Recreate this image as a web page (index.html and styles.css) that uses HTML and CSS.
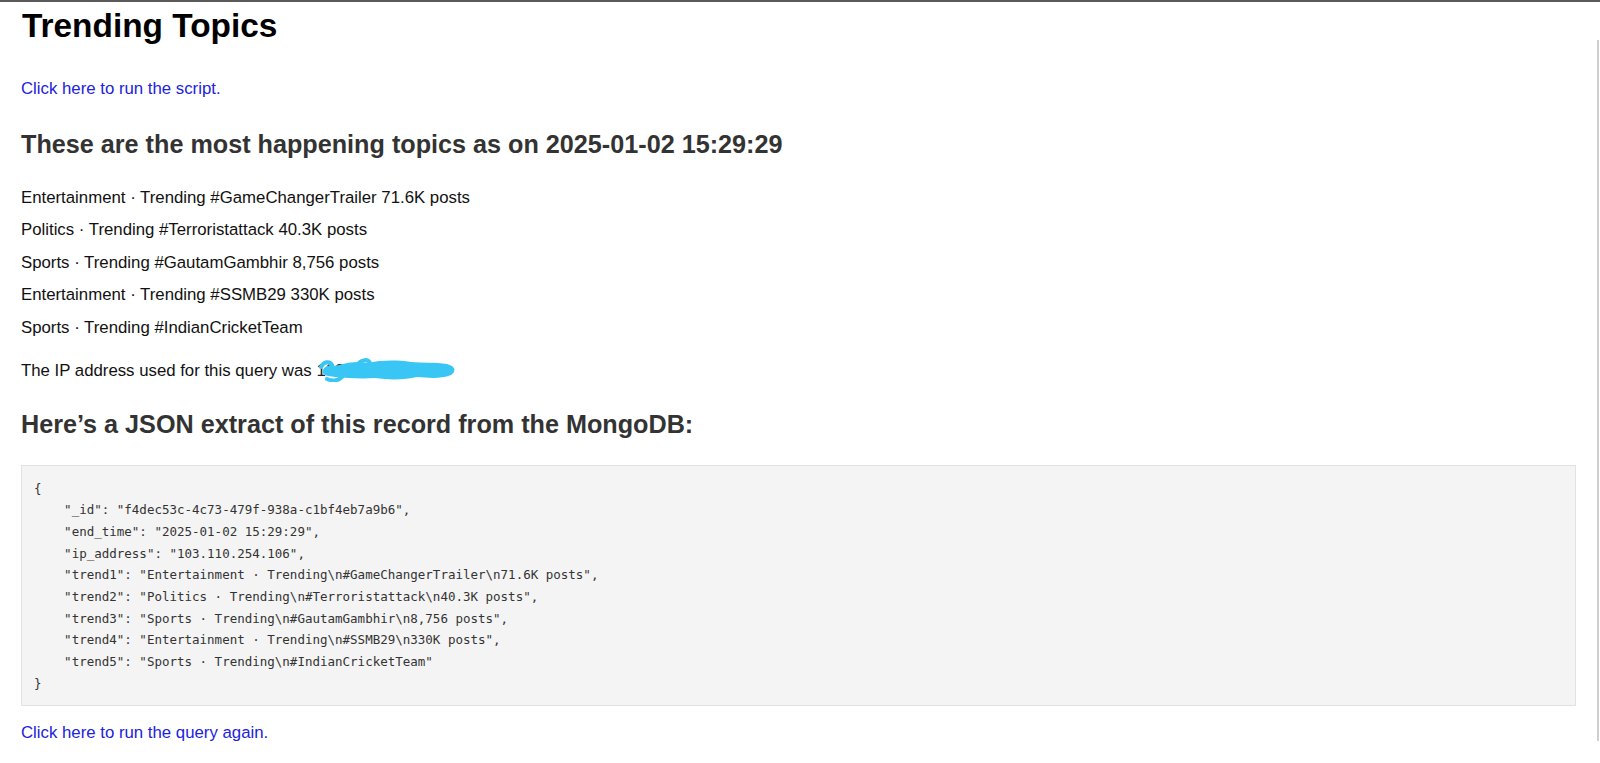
FILE: index.html
```html
<!DOCTYPE html>
<html lang="en">
<head>
<meta charset="utf-8">
<title>Trending Topics</title>
<link rel="stylesheet" href="styles.css">
</head>
<body>
<div class="frame-top"></div>
<div class="scroll-thumb"></div>
<main class="page">
  <h1 class="title">Trending Topics</h1>
  <p class="link-row"><a class="link" href="#">Click here to run the script.</a></p>
  <h2 class="subtitle">These are the most happening topics as on 2025-01-02 15:29:29</h2>
  <ul class="trends">
    <li class="trend">Entertainment · Trending #GameChangerTrailer 71.6K posts</li>
    <li class="trend">Politics · Trending #Terroristattack 40.3K posts</li>
    <li class="trend">Sports · Trending #GautamGambhir 8,756 posts</li>
    <li class="trend">Entertainment · Trending #SSMB29 330K posts</li>
    <li class="trend">Sports · Trending #IndianCricketTeam</li>
  </ul>
  <p class="ip">The IP address used for this query was <span class="ip-value">103.110.254.106<svg class="scribble" viewBox="0 0 140 24" width="142" height="24" aria-hidden="true"><path d="M5 12 C9 5 15 9 21 7 C31 4 41 3 51 5 C63 2 79 2 93 4 C105 5 117 4 129 6 C137 8 139 13 133 17 C123 21 111 20 99 19 C87 22 71 22 57 20 C43 21 29 20 17 19 C9 18 3 17 5 12 Z" fill="#39c6f4"/><path d="M3 9 C6 3 12 3 14 7 M9 21 C14 23 20 23 24 19 M40 6 C44 1 50 1 52 5" stroke="#39c6f4" stroke-width="4" fill="none" stroke-linecap="round"/></svg></span></p>
  <h2 class="subtitle json-title">Here’s a JSON extract of this record from the MongoDB:</h2>
  <pre class="code">{
    "_id": "f4dec53c-4c73-479f-938a-c1bf4eb7a9b6",
    "end_time": "2025-01-02 15:29:29",
    "ip_address": "103.110.254.106",
    "trend1": "Entertainment · Trending\n#GameChangerTrailer\n71.6K posts",
    "trend2": "Politics · Trending\n#Terroristattack\n40.3K posts",
    "trend3": "Sports · Trending\n#GautamGambhir\n8,756 posts",
    "trend4": "Entertainment · Trending\n#SSMB29\n330K posts",
    "trend5": "Sports · Trending\n#IndianCricketTeam"
}</pre>
  <p class="link-row last"><a class="link" href="#">Click here to run the query again.</a></p>
</main>
</body>
</html>
```
FILE: styles.css
```css
html, body {
  margin: 0;
  padding: 0;
  background: #ffffff;
}
body {
  font-family: "Liberation Sans", Arial, sans-serif;
  color: #111;
  font-size: 16.8px;
  overflow: hidden;
}
.frame-top {
  height: 2px;
  background: #5a5a5a;
}
.scroll-thumb {
  position: fixed;
  right: 1px;
  top: 40px;
  bottom: 22px;
  width: 2px;
  background: #cfcfcf;
}
.page {
  padding: 0 24px 0 21px;
}
.title {
  font-size: 33.4px;
  font-weight: bold;
  color: #000;
  margin: 5px 0 0 1px;
  line-height: 37px;
}
.link-row {
  margin: 35px 0 0;
  line-height: 19px;
}
.link {
  color: #2222dd;
  text-decoration: none;
}
.subtitle {
  font-size: 25.2px;
  font-weight: bold;
  color: #333;
  margin: 32px 0 0;
  line-height: 29px;
}
.trends {
  list-style: none;
  margin: 29px 0 0;
  padding: 0;
  display: flex;
  flex-direction: column;
  gap: 13.4px;
}
.trend {
  line-height: 19px;
  color: #111;
}
.ip {
  margin: 24.5px 0 0;
  line-height: 19px;
}
.ip-value {
  position: relative;
  color: #222;
}
.scribble {
  position: absolute;
  left: 1px;
  top: -3px;
}
.json-title {
  margin-top: 29.5px;
}
.code {
  margin: 26px 0 0;
  padding: 12px 12px 10px 12px;
  background: #f4f4f4;
  border: 1px solid #e2e2e2;
  font-family: "DejaVu Sans Mono", "Liberation Mono", monospace;
  font-size: 12.5px;
  line-height: 21.7px;
  color: #333;
  white-space: pre;
}
.last {
  margin-top: 17px;
}
```
